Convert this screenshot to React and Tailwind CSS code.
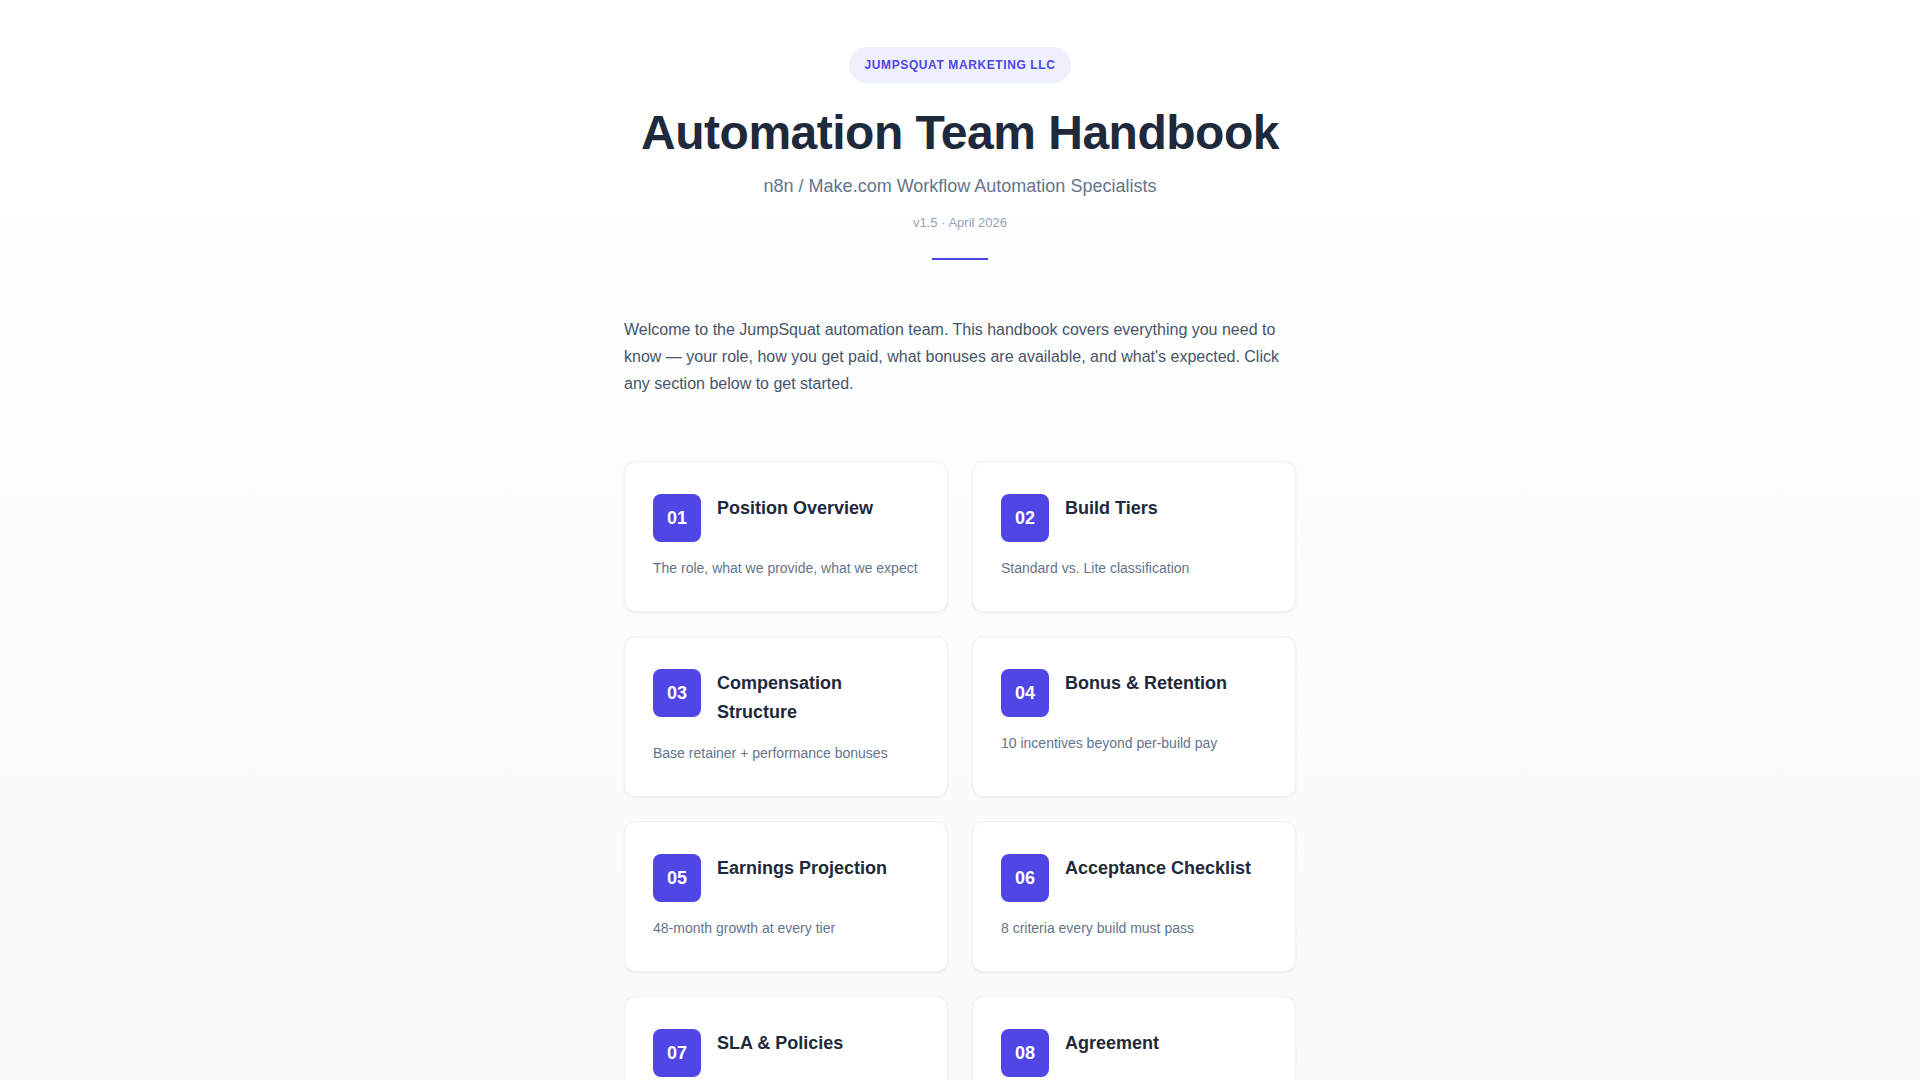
import React from 'react';

const sections = [
    { num: '01', title: 'Position Overview', desc: 'The role, what we provide, what we expect' },
    { num: '02', title: 'Build Tiers', desc: 'Standard vs. Lite classification' },
    { num: '03', title: 'Compensation Structure', desc: 'Base retainer + performance bonuses' },
    { num: '04', title: 'Bonus & Retention', desc: '10 incentives beyond per-build pay' },
    { num: '05', title: 'Earnings Projection', desc: '48-month growth at every tier' },
    { num: '06', title: 'Acceptance Checklist', desc: '8 criteria every build must pass' },
    { num: '07', title: 'SLA & Policies', desc: 'Response times, revisions and ownership' },
    { num: '08', title: 'Agreement', desc: 'Review and sign the handbook terms' },
];

const SectionCard = ({ section }) => (
    <div className="cursor-pointer rounded-xl border border-[#eef0f4] bg-white pt-8 pb-[33px] px-7 shadow-[0_1px_3px_rgba(15,23,42,0.06)] hover:border-indigo-300 transition-all">
        <div className="flex items-start gap-4">
            <div className="flex h-12 w-12 shrink-0 items-center justify-center rounded-lg bg-[#4f46e5] text-lg font-bold text-white">
                {section.num}
            </div>
            <div className="text-lg font-bold leading-[29px] text-[#1e293b]">{section.title}</div>
        </div>
        <div className="mt-4 text-sm leading-5 text-[#64748b]">{section.desc}</div>
    </div>
);

const App = () => {
    return (
        <div className="min-h-screen bg-gradient-to-b from-white to-[#f7f9fb] font-['Liberation_Sans',Arial,sans-serif]">
            <div className="mx-auto max-w-2xl pt-[47px] pb-16">
                {/* Header */}
                <div className="flex flex-col items-center text-center">
                    <span className="rounded-full bg-[#eef0fe] px-4 py-2.5 text-xs font-bold tracking-wider text-[#4f46e5]">
                        JUMPSQUAT MARKETING LLC
                    </span>
                    <h1 className="mt-[26px] text-5xl leading-none font-bold tracking-[-0.5px] text-[#1e293b]">
                        Automation Team Handbook
                    </h1>
                    <div className="mt-[15px] text-lg leading-7 text-[#64748b]">
                        n8n / Make.com Workflow Automation Specialists
                    </div>
                    <div className="mt-[13px] text-[13px] leading-5 text-[#94a3b8]">v1.5 · April 2026</div>
                    <div className="mt-[25px] h-0.5 w-14 bg-[#4f46e5]"></div>
                </div>

                {/* Intro */}
                <p className="mt-14 text-base leading-[27px] text-[#475569]">
                    Welcome to the JumpSquat automation team. This handbook covers everything you need to
                    know — your role, how you get paid, what bonuses are available, and what's expected. Click
                    any section below to get started.
                </p>

                {/* Sections */}
                <div className="mt-16 grid grid-cols-2 gap-6">
                    {sections.map((s) => (
                        <SectionCard key={s.num} section={s} />
                    ))}
                </div>
            </div>
        </div>
    );
};

export default App;
